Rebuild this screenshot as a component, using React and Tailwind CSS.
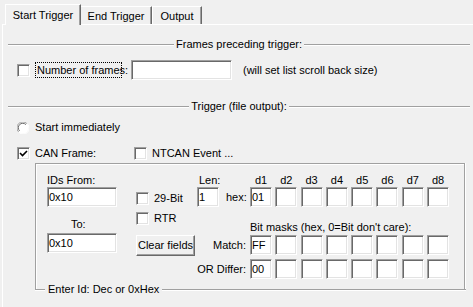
import React from "react";

const sunken =
  "bg-white border border-t-[#a0a0a0] border-l-[#a0a0a0] border-b-white border-r-white shadow-[inset_1px_1px_0_#696969,inset_-1px_-1px_0_#e3e3e3]";

const CheckBox = ({ checked }) => (
  <span className={`w-[13px] h-[13px] shrink-0 flex items-center justify-center ${sunken}`}>
    {checked && (
      <svg width="9" height="9" viewBox="0 0 9 9">
        <path d="M1 4 L3.5 6.5 L8 2" stroke="#000" strokeWidth="1.6" fill="none" />
      </svg>
    )}
  </span>
);

const Radio = () => (
  <svg width="12" height="12" viewBox="0 0 12 12" className="shrink-0">
    <circle cx="6" cy="6" r="5.5" fill="#fff" />
    <path d="M1.6 9.9 A5.5 5.5 0 0 1 9.9 1.6" stroke="#a0a0a0" fill="none" />
    <path d="M2.6 8.9 A4.3 4.3 0 0 1 8.9 2.6" stroke="#696969" fill="none" />
    <path d="M10.4 2.1 A5.5 5.5 0 0 1 2.1 10.4" stroke="#fff" fill="none" />
  </svg>
);

const Line = ({ className = "flex-1" }) => (
  <span className={`${className} h-[2px] border-t border-t-[#a0a0a0] border-b border-b-white`} />
);

const Separator = ({ label, className }) => (
  <div className={`flex items-center h-[13px] w-[462px] ml-[5px] ${className}`}>
    <Line />
    <span className="mx-[2px] whitespace-nowrap">{label}</span>
    <Line />
  </div>
);

const Cell = ({ value }) => (
  <div className={`w-[22px] h-[20px] shrink-0 flex items-center pl-[1px] ${sunken}`}>{value}</div>
);

const CellRow = ({ first }) => (
  <div className="flex gap-[3.3px]">
    {[0, 1, 2, 3, 4, 5, 6, 7].map((i) => (
      <Cell key={i} value={i === 0 ? first : ""} />
    ))}
  </div>
);

export default function App() {
  return (
    <div className="w-[473px] h-[307px] bg-[#f0f0f0] overflow-hidden font-['Liberation_Sans',Arial,sans-serif] text-[11px] leading-[13px] text-black">
      {/* tabs */}
      <div className="flex items-end h-[25px] pl-[5px]">
        <div className="relative z-10 w-[76px] h-[21px] bg-[#f0f0f0] border-l border-t border-white border-r border-r-[#696969] shadow-[inset_-1px_0_0_#a0a0a0] flex justify-center pt-[4px]">
          Start Trigger
        </div>
        <div className="w-[71px] h-[18px] mb-[1px] border-t border-white border-r border-r-[#696969] shadow-[inset_-1px_0_0_#a0a0a0] flex justify-center pt-[3px]">
          End Trigger
        </div>
        <div className="w-[50px] h-[18px] mb-[1px] border-l border-t border-white border-r border-r-[#696969] shadow-[inset_-1px_0_0_#a0a0a0] flex justify-center pt-[3px]">
          Output
        </div>
      </div>

      {/* panel */}
      <div className="-mt-[1px] ml-[2px] h-[290px] border-t border-l border-white flex flex-col">
        <Separator label="Frames preceding trigger:" className="mt-[13px]" />

        <div className="flex items-center h-[20px] mt-[9px] ml-[14px]">
          <CheckBox />
          <span className="ml-[5px] w-[87px] h-[16px] border border-dotted border-black flex items-center pl-[1px] whitespace-nowrap">
            Number of frames:
          </span>
          <span className={`ml-[9px] w-[101px] h-[20px] ${sunken}`} />
          <span className="ml-[11px]">(will set list scroll back size)</span>
        </div>

        <Separator label="Trigger (file output):" className="mt-[20px]" />

        <div className="flex items-center h-[13px] mt-[8px] ml-[14px]">
          <Radio />
          <span className="ml-[6px]">Start immediately</span>
        </div>

        <div className="flex items-center h-[13px] mt-[13px] ml-[14px]">
          <CheckBox checked />
          <span className="ml-[5px] w-[99px]">CAN Frame:</span>
          <CheckBox />
          <span className="ml-[5px]">NTCAN Event ...</span>
        </div>

        {/* group box */}
        <div className="mt-[3px] ml-[32px] w-[430px] flex flex-col">
          <div className="h-[127px] border-l border-t border-r border-[#a0a0a0] shadow-[inset_1px_1px_0_#fff,1px_0_0_#fff] flex items-start">
            {/* ids */}
            <div className="ml-[11px] w-[70px] flex flex-col">
              <span className="mt-[10px] h-[13px]">IDs From:</span>
              <div className={`h-[20px] flex items-center pl-[1px] ${sunken}`}>0x10</div>
              <span className="mt-[11px] h-[13px] pl-[24px]">To:</span>
              <div className={`mt-[2px] h-[20px] flex items-center pl-[1px] ${sunken}`}>0x10</div>
            </div>

            {/* options */}
            <div className="ml-[19px] w-[60px] flex flex-col">
              <div className="mt-[28px] h-[13px] flex items-center">
                <CheckBox />
                <span className="ml-[5px]">29-Bit</span>
              </div>
              <div className="mt-[7px] h-[13px] flex items-center">
                <CheckBox />
                <span className="ml-[5px]">RTR</span>
              </div>
              <button className="mt-[10px] w-[59px] h-[21px] bg-[#f0f0f0] border border-t-white border-l-white border-b-[#696969] border-r-[#696969] shadow-[inset_-1px_-1px_0_#a0a0a0] flex items-center justify-center whitespace-nowrap">
                Clear fields
              </button>
            </div>

            {/* data bytes */}
            <div className="ml-[1px] flex flex-col">
              <div className="mt-[10px] h-[13px] flex">
                <span className="w-[53px] pl-[2px]">Len:</span>
                <div className="flex gap-[3.3px]">
                  {["d1", "d2", "d3", "d4", "d5", "d6", "d7", "d8"].map((d) => (
                    <span key={d} className="w-[22px] text-center">
                      {d}
                    </span>
                  ))}
                </div>
              </div>
              <div className="h-[20px] flex">
                <div className="w-[53px] flex items-center">
                  <div className={`w-[22px] h-[20px] flex items-center pl-[1px] ${sunken}`}>1</div>
                  <span className="ml-[7px]">hex:</span>
                </div>
                <CellRow first="01" />
              </div>
              <span className="mt-[14px] h-[13px] pl-[53px] whitespace-nowrap">
                Bit masks (hex, 0=Bit don't care):
              </span>
              <div className="mt-[1px] h-[20px] flex">
                <span className="w-[53px] flex items-center justify-end pr-[4px]">Match:</span>
                <CellRow first="FF" />
              </div>
              <div className="mt-[4px] h-[20px] flex">
                <span className="w-[53px] flex items-center justify-end pr-[4px] whitespace-nowrap">OR Differ:</span>
                <CellRow first="00" />
              </div>
            </div>
          </div>
          <div className="-mt-[7px] h-[13px] flex items-center w-[431px]">
            <Line className="w-[10px]" />
            <span className="mx-[3px] whitespace-nowrap">Enter Id: Dec or 0xHex</span>
            <Line />
          </div>
        </div>
      </div>
    </div>
  );
}
